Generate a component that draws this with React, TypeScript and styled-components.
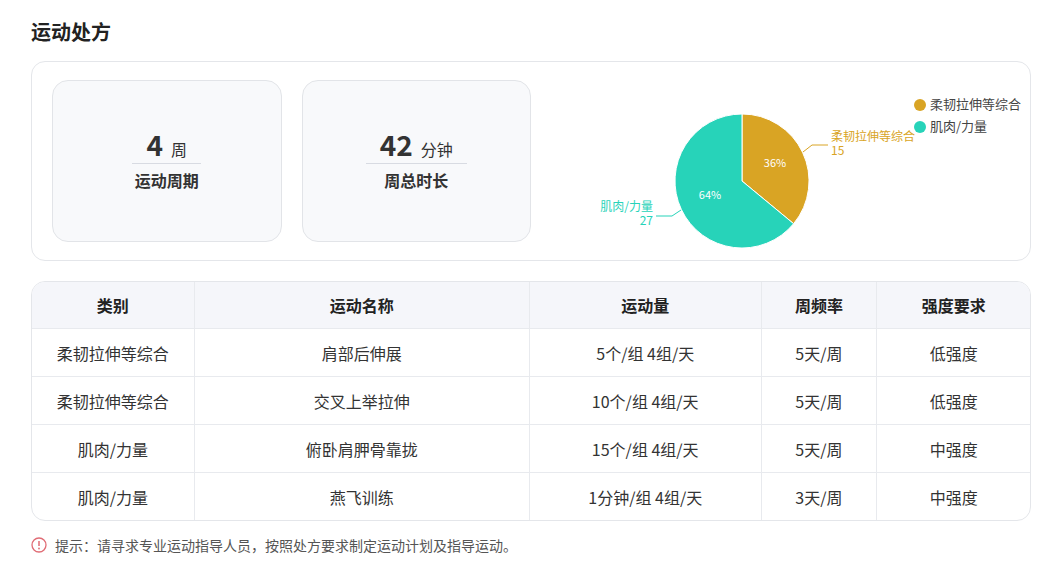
import React from 'react';
import styled, { createGlobalStyle } from 'styled-components';

const Global = createGlobalStyle`
  body {
    margin: 0;
    background: #fff;
    font-family: "Noto Sans CJK SC", "Noto Sans", sans-serif;
    color: #333;
  }
`;

const Page = styled.div`
  padding: 16px 31px 0 31px;
  width: 1000px;
`;
const Title = styled.h2`
  margin: 0 0 13px;
  font-size: 20px;
  font-weight: 700;
  line-height: 32px;
  color: #222;
`;
const Card = styled.div`
  display: flex;
  gap: 20px;
  padding: 18px 0 18px 20px;
  border: 1px solid #e4e6ea;
  border-radius: 14px;
`;
const StatBox = styled.div`
  width: 228px;
  height: 160px;
  border: 1px solid #e2e4e8;
  border-radius: 16px;
  background: #f8f9fb;
  display: flex;
  flex-direction: column;
  align-items: center;
  justify-content: center;
`;
const Value = styled.div`
  display: flex;
  align-items: baseline;
  gap: 8px;
  padding: 0 14px 2px;
  border-bottom: 1px solid #d8dbe2;
  margin-top: -4px;
`;
const Num = styled.span`
  font-size: 28px;
  font-weight: 700;
  line-height: 34px;
  color: #333;
`;
const Unit = styled.span`
  font-size: 16px;
  color: #333;
`;
const StatLabel = styled.div`
  margin-top: 4px;
  font-size: 16px;
  font-weight: 700;
  color: #333;
`;
const Chart = styled.svg`
  display: block;
  flex: none;
  overflow: visible;
`;
const Table = styled.table`
  margin-top: 20px;
  width: 1000px;
  border-collapse: separate;
  border-spacing: 0;
  border: 1px solid #e4e6ea;
  border-radius: 14px;
  overflow: hidden;
  font-size: 16px;
  th, td {
    padding: 0;
    text-align: center;
    border-right: 1px solid #e8eaee;
    &:last-child { border-right: none; }
  }
  th {
    height: 46px;
    background: #f5f6fa;
    font-weight: 700;
    color: #222;
  }
  td {
    height: 47px;
    border-top: 1px solid #e8eaee;
    color: #333;
  }
`;
const Tip = styled.div`
  display: flex;
  align-items: center;
  gap: 8px;
  margin-top: 14px;
  font-size: 14px;
  color: #555;
`;

const cols = [163, 336, 232, 116, 153];
const rows = [
  ['柔韧拉伸等综合', '肩部后伸展', '5个/组 4组/天', '5天/周', '低强度'],
  ['柔韧拉伸等综合', '交叉上举拉伸', '10个/组 4组/天', '5天/周', '低强度'],
  ['肌肉/力量', '俯卧肩胛骨靠拢', '15个/组 4组/天', '5天/周', '中强度'],
  ['肌肉/力量', '燕飞训练', '1分钟/组 4组/天', '3天/周', '中强度'],
];

const gold = '#d9a424';
const teal = '#27d3b9';

export default function App() {
  const cx = 742, cy = 180, r = 67;
  const a = (36 / 100) * Math.PI * 2;
  const ex = cx + r * Math.sin(a), ey = cy - r * Math.cos(a);
  return (
    <Page>
      <Global />
      <Title>运动处方</Title>
      <Card>
        <StatBox>
          <Value><Num>4</Num><Unit>周</Unit></Value>
          <StatLabel>运动周期</StatLabel>
        </StatBox>
        <StatBox>
          <Value><Num>42</Num><Unit>分钟</Unit></Value>
          <StatLabel>周总时长</StatLabel>
        </StatBox>
        <Chart width={479} height={162} viewBox="551 79 479 162">
          <path d={`M${cx} ${cy} L${cx} ${cy - r} A${r} ${r} 0 0 1 ${ex} ${ey} Z`} fill={gold} stroke="#fff" strokeWidth={1} />
          <path d={`M${cx} ${cy} L${ex} ${ey} A${r} ${r} 0 1 1 ${cx} ${cy - r} Z`} fill={teal} stroke="#fff" strokeWidth={1} />
          <g fontSize={11} fill="#fff" textAnchor="middle">
            <text x={775} y={166}>36%</text>
            <text x={710} y={198}>64%</text>
          </g>
          <polyline points="803,151 812,144 828,144" fill="none" stroke={gold} />
          <g fontSize={12} fill={gold}>
            <text x={831} y={140}>柔韧拉伸等综合</text>
            <text x={831} y={154}>15</text>
          </g>
          <polyline points="681,209 672,215 656,215" fill="none" stroke={teal} />
          <g fontSize={12} fill={teal} textAnchor="end">
            <text x={653} y={210}>肌肉/力量</text>
            <text x={653} y={224}>27</text>
          </g>
          <circle cx={920} cy={104} r={6} fill={gold} />
          <circle cx={920} cy={126} r={6} fill={teal} />
          <g fontSize={13} fill="#444">
            <text x={930} y={108}>柔韧拉伸等综合</text>
            <text x={930} y={130}>肌肉/力量</text>
          </g>
        </Chart>
      </Card>
      <Table>
        <colgroup>
          {cols.map((w, i) => <col key={i} style={{ width: w }} />)}
        </colgroup>
        <thead>
          <tr>
            {['类别', '运动名称', '运动量', '周频率', '强度要求'].map(h => <th key={h}>{h}</th>)}
          </tr>
        </thead>
        <tbody>
          {rows.map((row, i) => (
            <tr key={i}>{row.map((c, j) => <td key={j}>{c}</td>)}</tr>
          ))}
        </tbody>
      </Table>
      <Tip>
        <svg width="16" height="16" viewBox="0 0 16 16">
          <circle cx="8" cy="8" r="7" fill="none" stroke="#e06c75" strokeWidth="1.3" />
          <line x1="8" y1="4" x2="8" y2="9" stroke="#e06c75" strokeWidth="1.5" />
          <circle cx="8" cy="11.5" r="0.9" fill="#e06c75" />
        </svg>
        提示：请寻求专业运动指导人员，按照处方要求制定运动计划及指导运动。
      </Tip>
    </Page>
  );
}
